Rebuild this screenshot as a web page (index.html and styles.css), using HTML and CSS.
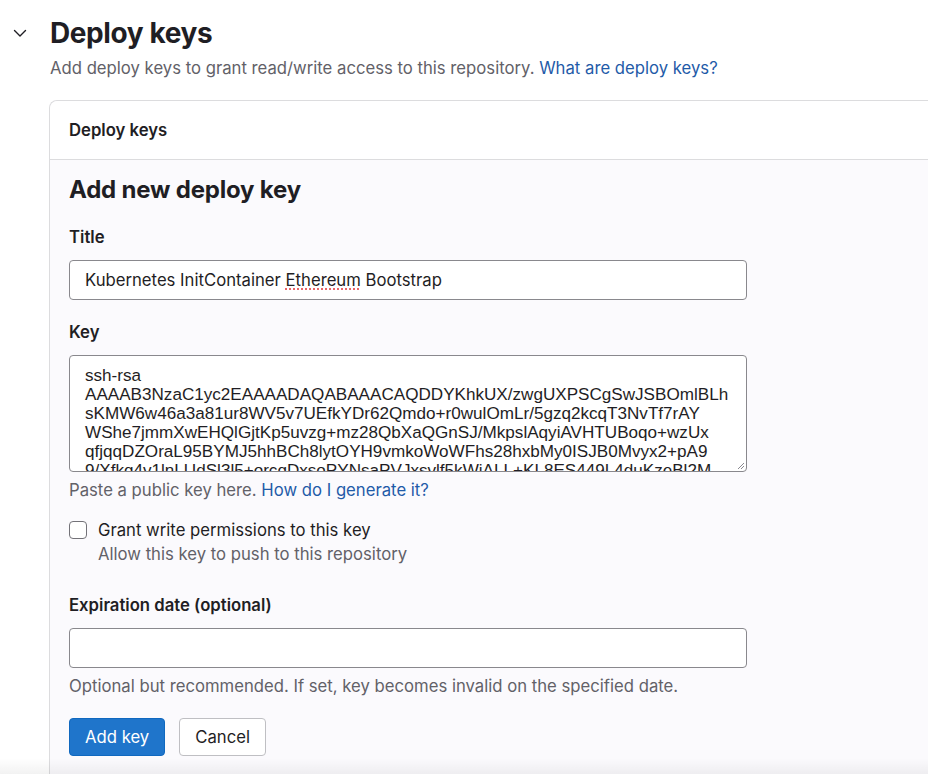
FILE: index.html
```html
<!DOCTYPE html>
<html lang="en">
<head>
<meta charset="utf-8">
<title>Deploy keys</title>
<link rel="stylesheet" href="styles.css">
</head>
<body>
<section class="settings">
  <div class="settings-head">
    <button class="toggle" aria-label="Collapse">
      <svg width="16" height="16" viewBox="0 0 16 16"><path d="M2.5 5.5 8 11l5.5-5.5" fill="none" stroke="#1f1e24" stroke-width="1.4" stroke-linecap="round" stroke-linejoin="round"/></svg>
    </button>
    <h2 class="settings-title">Deploy keys</h2>
  </div>
  <p class="settings-desc">Add deploy keys to grant read/write access to this repository. <a href="#" class="link">What are deploy keys?</a></p>

  <div class="card">
    <div class="card-header">Deploy keys</div>
    <div class="card-body">
      <h3 class="form-title">Add new deploy key</h3>

      <div class="field">
        <label class="label">Title</label>
        <div class="input"><span>Kubernetes InitContainer <span class="misspelt">Ethereum</span> Bootstrap</span></div>
      </div>

      <div class="field">
        <label class="label">Key</label>
        <div class="textarea">
          <div class="textarea-text">ssh-rsa<br>AAAAB3NzaC1yc2EAAAADAQABAAACAQDDYKhkUX/zwgUXPSCgSwJSBOmlBLh<br>sKMW6w46a3a81ur8WV5v7UEfkYDr62Qmdo+r0wulOmLr/5gzq2kcqT3NvTf7rAY<br>WShe7jmmXwEHQlGjtKp5uvzg+mz28QbXaQGnSJ/MkpslAqyiAVHTUBoqo+wzUx<br>qfjqqDZOraL95BYMJ5hhBCh8lytOYH9vmkoWoWFhs28hxbMy0ISJB0Mvyx2+pA9<br>9/Xfkq4v1lnLUdSl3l5+orcqDxsoPYNsaPVJxsvlf5kWiALL+KL8ES449L4duKzeBl2M</div>
          <svg class="grip" width="9" height="9" viewBox="0 0 9 9"><path d="M8 2 2 8M8 5 5 8" stroke="#8a8990" stroke-width="1"/></svg>
        </div>
        <p class="help">Paste a public key here. <a href="#" class="link">How do I generate it?</a></p>
      </div>

      <div class="check">
        <span class="checkbox"></span>
        <div>
          <div class="check-label">Grant write permissions to this key</div>
          <div class="check-help">Allow this key to push to this repository</div>
        </div>
      </div>

      <div class="field">
        <label class="label">Expiration date (optional)</label>
        <div class="input"></div>
        <p class="help">Optional but recommended. If set, key becomes invalid on the specified date.</p>
      </div>

      <div class="actions">
        <button class="btn btn-primary">Add key</button>
        <button class="btn">Cancel</button>
      </div>
    </div>
  </div>
</section>
<div class="bottom-fade"></div>
</body>
</html>
```

FILE: styles.css
```css
html, body {
  margin: 0;
  padding: 0;
  background: #fff;
  overflow: hidden;
}
body {
  font-family: Inter, "Noto Sans", sans-serif;
  color: #1f1e24;
  width: 928px;
  height: 774px;
  position: relative;
}
.settings {
  padding: 12px 0 0 0;
}
.settings-head {
  display: flex;
  align-items: center;
  height: 42px;
}
.toggle {
  width: 40px;
  height: 32px;
  padding: 0 0 0 12px;
  margin: 0 10px 0 0;
  border: 0;
  background: none;
  display: flex;
  align-items: center;
}
.settings-title {
  margin: 0;
  font-size: 28px;
  font-weight: 700;
  letter-spacing: -0.4px;
  line-height: 42px;
}
.settings-desc {
  margin: 2px 0 0 50px;
  font-size: 16.7px;
  line-height: 24px;
  color: #626168;
}
.link {
  color: #1f5ba8;
  text-decoration: none;
}
.card {
  margin: 20px 0 0 49px;
  width: 920px;
  border: 1px solid #dcdcde;
  border-right: 0;
  border-bottom: 0;
  border-radius: 8px 0 0 0;
  background: #fbfafd;
  height: 700px;
}
.card-header {
  background: #fff;
  height: 58px;
  border-bottom: 1px solid #dcdcde;
  border-radius: 8px 0 0 0;
  padding: 0 19px;
  display: flex;
  align-items: center;
  font-size: 16.7px;
  font-weight: 600;
}
.card-body {
  padding: 14px 19px 0;
}
.form-title {
  margin: 0 0 19px;
  font-size: 24px;
  font-weight: 700;
  line-height: 32px;
  letter-spacing: -0.2px;
}
.field {
  display: flex;
  flex-direction: column;
}
.label {
  font-size: 16.7px;
  font-weight: 600;
  line-height: 24px;
  margin-bottom: 11px;
}
.input {
  width: 678px;
  height: 40px;
  box-sizing: border-box;
  border: 1px solid #89888d;
  border-radius: 4px;
  background: #fff;
  padding: 0 15px;
  display: flex;
  align-items: center;
  font-size: 16.7px;
  margin-bottom: 20px;
}
.misspelt {
  text-decoration: underline dotted #e5484d;
  text-underline-offset: 3px;
}
.textarea {
  width: 678px;
  height: 117px;
  box-sizing: border-box;
  border: 1px solid #89888d;
  border-radius: 4px;
  background: #fff;
  padding: 10px 15px 0;
  overflow: hidden;
  position: relative;
}
.textarea-text {
  font-family: "Liberation Sans", Arial, sans-serif;
  font-size: 17.1px;
  line-height: 19px;
  white-space: nowrap;
}
.grip {
  position: absolute;
  right: 1px;
  bottom: 1px;
}
.help {
  margin: 6px 0 0;
  font-size: 16.7px;
  line-height: 24px;
  color: #626168;
}
.field .input + .help {
  margin-top: -14px;
}
.check {
  display: flex;
  gap: 11px;
  margin-top: 16px;
}
.checkbox {
  width: 18px;
  height: 18px;
  box-sizing: border-box;
  border: 1px solid #737278;
  border-radius: 4px;
  background: #fff;
  margin-top: 3px;
}
.check-label {
  font-size: 16.7px;
  line-height: 24px;
}
.check-help {
  font-size: 16.7px;
  line-height: 24px;
  color: #626168;
}
.check + .field {
  margin-top: 27px;
}
.actions {
  display: flex;
  gap: 14px;
  margin-top: 20px;
}
.btn {
  height: 38px;
  padding: 0 15px;
  border: 1px solid #bfbfc3;
  border-radius: 4px;
  background: #fff;
  font-family: Inter, sans-serif;
  font-size: 16.7px;
  color: #1f1e24;
}
.btn-primary {
  background: #1f75cb;
  border-color: #1068bf;
  color: #fff;
}
.bottom-fade {
  position: absolute;
  left: 0;
  right: 0;
  bottom: 0;
  height: 16px;
  background: linear-gradient(to bottom, rgba(0, 0, 0, 0), rgba(0, 0, 0, 0.05));
  pointer-events: none;
}
```
